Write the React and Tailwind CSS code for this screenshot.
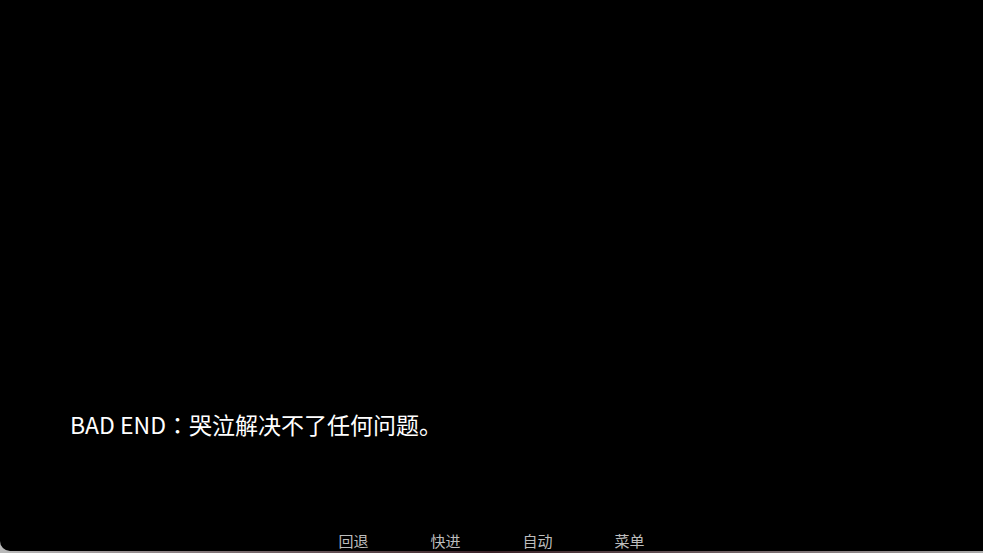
import React from 'react';

const menuItems = ['回退', '快进', '自动', '菜单'];

const App = () => {
    return (
        <div className="w-[983px] h-[553px] overflow-hidden bg-gradient-to-r from-[#b9b9b9] via-[#3a2228] to-[#a9a9a9] flex flex-col" style={{ fontFamily: '"Noto Sans CJK SC", "Noto Sans", sans-serif' }}>
            <div className="h-[551px] bg-black rounded-bl-[10px] flex flex-col">
                <div className="flex-1" />
                <p className="pl-[70px] text-[23px] leading-[30px] text-white">
                    BAD END<span style={{ fontFamily: '"Noto Sans CJK JP", sans-serif' }}>：</span>哭泣解决不了任何问题。
                </p>
                <div className="h-[92px]" />
                <div className="flex justify-center gap-[62px] h-[20px]">
                    {menuItems.map((label) => (
                        <button key={label} className="text-[15px] leading-[20px] text-[#bdbdbd] w-[30px] whitespace-nowrap">
                            {label}
                        </button>
                    ))}
                </div>
            </div>
        </div>
    );
};

export default App;
